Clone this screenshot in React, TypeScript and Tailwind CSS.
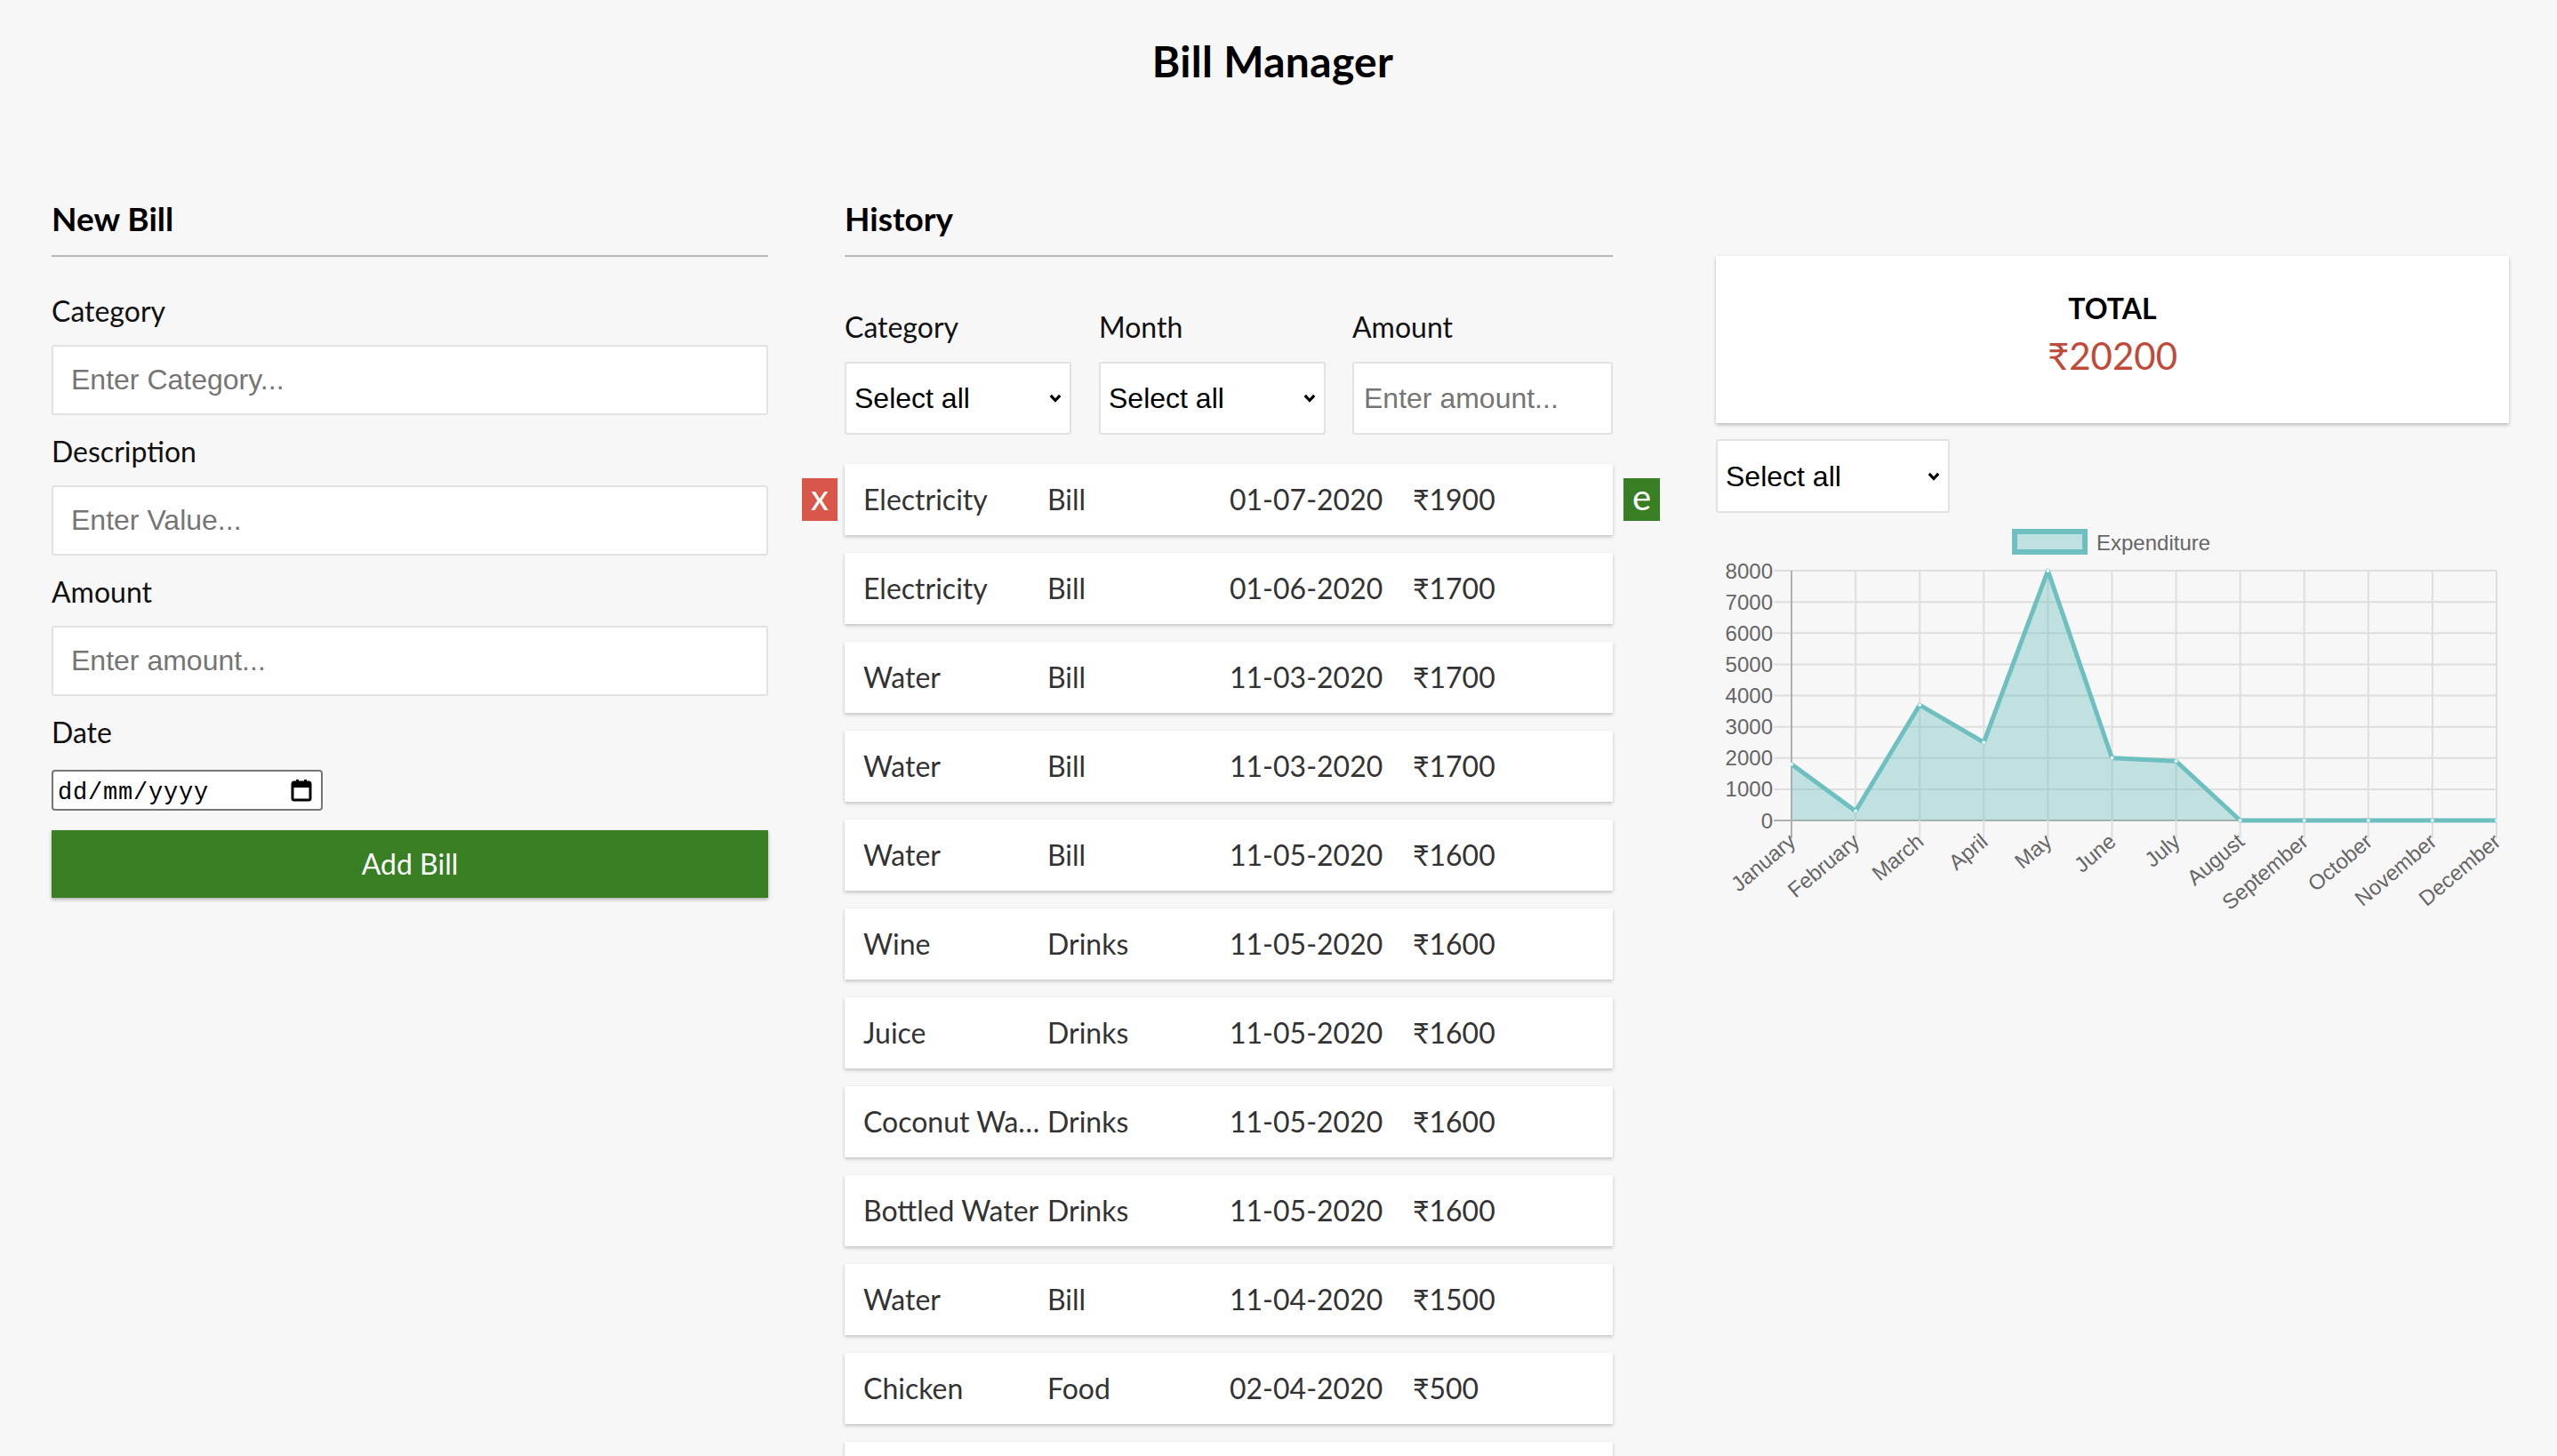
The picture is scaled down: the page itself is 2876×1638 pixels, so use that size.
import React from "react";

const bills = [
  { category: "Electricity", description: "Bill", date: "01-07-2020", amount: 1900 },
  { category: "Electricity", description: "Bill", date: "01-06-2020", amount: 1700 },
  { category: "Water", description: "Bill", date: "11-03-2020", amount: 1700 },
  { category: "Water", description: "Bill", date: "11-03-2020", amount: 1700 },
  { category: "Water", description: "Bill", date: "11-05-2020", amount: 1600 },
  { category: "Wine", description: "Drinks", date: "11-05-2020", amount: 1600 },
  { category: "Juice", description: "Drinks", date: "11-05-2020", amount: 1600 },
  { category: "Coconut Water", description: "Drinks", date: "11-05-2020", amount: 1600 },
  { category: "Bottled Water", description: "Drinks", date: "11-05-2020", amount: 1600 },
  { category: "Water", description: "Bill", date: "11-04-2020", amount: 1500 },
  { category: "Chicken", description: "Food", date: "02-04-2020", amount: 500 },
  { category: "Rent", description: "Home", date: "01-02-2020", amount: 300 },
];

const months = [
  "January",
  "February",
  "March",
  "April",
  "May",
  "June",
  "July",
  "August",
  "September",
  "October",
  "November",
  "December",
];

const monthly = [1800, 300, 3700, 2500, 8000, 2000, 1900, 0, 0, 0, 0, 0];

const Chevron = () => (
  <svg
    className="pointer-events-none absolute right-[11px] top-1/2 -translate-y-1/2"
    width="14"
    height="10"
    viewBox="0 0 14 10"
  >
    <polyline points="1.8,1.8 7,7.5 12.2,1.8" fill="none" stroke="#000" strokeWidth="3.2" />
  </svg>
);

const Select = ({ width }: { width: string }) => (
  <div className={`relative ${width}`}>
    <select className="appearance-none w-full h-full bg-white border-2 border-[#e2e2e2] rounded-[3px] pl-[9px] text-[32px] text-black font-['Liberation_Sans',sans-serif] outline-none">
      <option>Select all</option>
    </select>
    <Chevron />
  </div>
);

const Field = ({ label, placeholder, first }: { label: string; placeholder: string; first?: boolean }) => (
  <>
    <label className={`block text-[32px] leading-[30px] text-[#111] ${first ? "mt-[46px]" : "mt-[26px]"}`}>
      {label}
    </label>
    <input
      placeholder={placeholder}
      className="block mt-[23px] w-full h-[79px] bg-white border-2 border-[#e2e2e2] rounded-[3px] pl-[20px] text-[32px] font-['Liberation_Sans',sans-serif] placeholder:text-[#757575] outline-none"
    />
  </>
);

const Chart = () => {
  const left = 85;
  const right = 878;
  const top = 62;
  const bottom = 343;
  const step = (right - left) / 11;
  const y = (v: number) => bottom - (v * (bottom - top)) / 8000;
  const pts = monthly.map((v, i) => [left + i * step, y(v)]);
  const line = pts.map((p) => p.join(",")).join(" ");
  const area = `${left},${bottom} ${line} ${right},${bottom}`;
  return (
    <svg width="892" height="460" viewBox="0 0 892 460" className="block">
      <rect x="336" y="18" width="79" height="23" fill="#bfe1e1" stroke="#6dc0bf" strokeWidth="6" />
      <text x="428" y="39" fontSize="24" fill="#666" fontFamily="Liberation Sans, sans-serif">
        Expenditure
      </text>
      {[8000, 7000, 6000, 5000, 4000, 3000, 2000, 1000, 0].map((v) => (
        <g key={v}>
          <line
            x1={65}
            x2={right}
            y1={y(v)}
            y2={y(v)}
            stroke={v === 0 ? "#b0b0b0" : "#dedede"}
            strokeWidth="2"
          />
          <text
            x="64"
            y={y(v) + 8.5}
            textAnchor="end"
            fontSize="24"
            fill="#666"
            fontFamily="Liberation Sans, sans-serif"
          >
            {v}
          </text>
        </g>
      ))}
      {months.map((m, i) => (
        <g key={m}>
          <line
            x1={left + i * step}
            x2={left + i * step}
            y1={top}
            y2={bottom + 20}
            stroke={i === 0 ? "#b0b0b0" : "#dedede"}
            strokeWidth="2"
          />
          <text
            transform={`translate(${left + i * step - 5}, 356) rotate(-40)`}
            dy="0.72em"
            textAnchor="end"
            fontSize="24"
            fill="#666"
            fontFamily="Liberation Sans, sans-serif"
          >
            {m}
          </text>
        </g>
      ))}
      <polygon points={area} fill="rgba(109,192,191,0.4)" />
      <polyline points={line} fill="none" stroke="#6dc0bf" strokeWidth="5" strokeLinejoin="round" />
      {pts.map(([px, py], i) => (
        <circle key={i} cx={px} cy={py} r="2" fill="#e6f4f4" />
      ))}
    </svg>
  );
};

export default function App() {
  return (
    <div className="h-[1638px] overflow-hidden bg-[#f7f7f7] font-['Lato',sans-serif] text-black">
      <h1 className="pt-[45px] pr-[13px] text-center text-[48px] leading-[47px] tracking-[0.3px] font-bold">
        Bill Manager
      </h1>

      <div className="flex pl-[58px] mt-[135px]">
        {/* new bill */}
        <div className="w-[806px]">
          <h2 className="text-[37px] leading-[37px] font-bold">New Bill</h2>
          <div className="mt-[23px] h-[2px] bg-[#b7b7b7]"></div>
          <Field label="Category" placeholder="Enter Category..." first />
          <Field label="Description" placeholder="Enter Value..." />
          <Field label="Amount" placeholder="Enter amount..." />
          <label className="block mt-[26px] text-[32px] leading-[30px] text-[#111]">Date</label>
          <div className="mt-[27px] w-[305px] h-[46px] bg-white border-2 border-[#767676] rounded-[4px] flex items-center justify-between pl-[5px] pr-[10px]">
            <span className="pt-[6px] font-['Liberation_Mono',monospace] text-[27px] leading-[27px] tracking-[0.8px] text-black">
              dd/mm/yyyy
            </span>
            <svg width="24" height="26" viewBox="0 0 24 26">
              <rect x="2" y="4" width="20" height="20" rx="2" fill="none" stroke="#000" strokeWidth="3" />
              <rect x="2" y="4" width="20" height="6" fill="#000" />
              <rect x="6" y="1" width="3" height="5" fill="#000" />
              <rect x="15" y="1" width="3" height="5" fill="#000" />
            </svg>
          </div>
          <button className="mt-[22px] w-full h-[76px] bg-[#387f24] text-white text-[32px] shadow-[0_2px_4px_rgba(0,0,0,0.3)]">
            Add Bill
          </button>
        </div>

        {/* history */}
        <div className="ml-[86px] w-[864px]">
          <h2 className="text-[37px] leading-[37px] font-bold">History</h2>
          <div className="mt-[23px] h-[2px] bg-[#b7b7b7]"></div>
          <div className="flex mt-[64px] text-[32px] leading-[30px] text-[#111]">
            <span className="w-[255px]">Category</span>
            <span className="ml-[31px] w-[255px]">Month</span>
            <span className="ml-[30px]">Amount</span>
          </div>
          <div className="flex mt-[24px] h-[82px]">
            <Select width="w-[255px]" />
            <div className="ml-[31px] flex">
              <Select width="w-[255px]" />
            </div>
            <input
              placeholder="Enter amount..."
              className="ml-[30px] w-[293px] h-full bg-white border-2 border-[#e2e2e2] rounded-[3px] pl-[11px] text-[32px] font-['Liberation_Sans',sans-serif] placeholder:text-[#757575] outline-none"
            />
          </div>
          <div className="mt-[33px] flex flex-col gap-[20px]">
            {bills.map((b, i) => (
              <div
                key={i}
                className="relative flex items-center h-[80px] shrink-0 bg-white pl-[21px] text-[32px] leading-[42px] text-[#333] shadow-[0_2px_4px_rgba(0,0,0,0.22)]"
              >
                {i === 0 && (
                  <>
                    <span className="absolute left-[-48px] top-[16px] w-[40px] h-[48px] bg-[#d9574a] text-white text-[40px] flex items-center justify-center pb-[6px]">
                      x
                    </span>
                    <span className="absolute right-[-53px] top-[16px] w-[41px] h-[48px] bg-[#387f24] text-white text-[40px] flex items-center justify-center pb-[6px]">
                      e
                    </span>
                  </>
                )}
                <span className="w-[207px] whitespace-nowrap overflow-hidden text-ellipsis">{b.category}</span>
                <span className="w-[205px]">{b.description}</span>
                <span className="w-[206px]">{b.date}</span>
                <span>₹{b.amount}</span>
              </div>
            ))}
          </div>
        </div>

        {/* summary */}
        <div className="ml-[116px] w-[892px]">
          <div className="mt-[61px] h-[188px] bg-white shadow-[0_2px_4px_rgba(0,0,0,0.25)] pt-[44px] text-center">
            <div className="text-[32px] leading-[30px] font-bold">TOTAL</div>
            <div className="mt-[18px] text-[42px] leading-[40px] text-[#bf4a3a]">₹20200</div>
          </div>
          <div className="mt-[18px] h-[83px] flex">
            <Select width="w-[263px]" />
          </div>
          <div className="mt-[3px]">
            <Chart />
          </div>
        </div>
      </div>
    </div>
  );
}
